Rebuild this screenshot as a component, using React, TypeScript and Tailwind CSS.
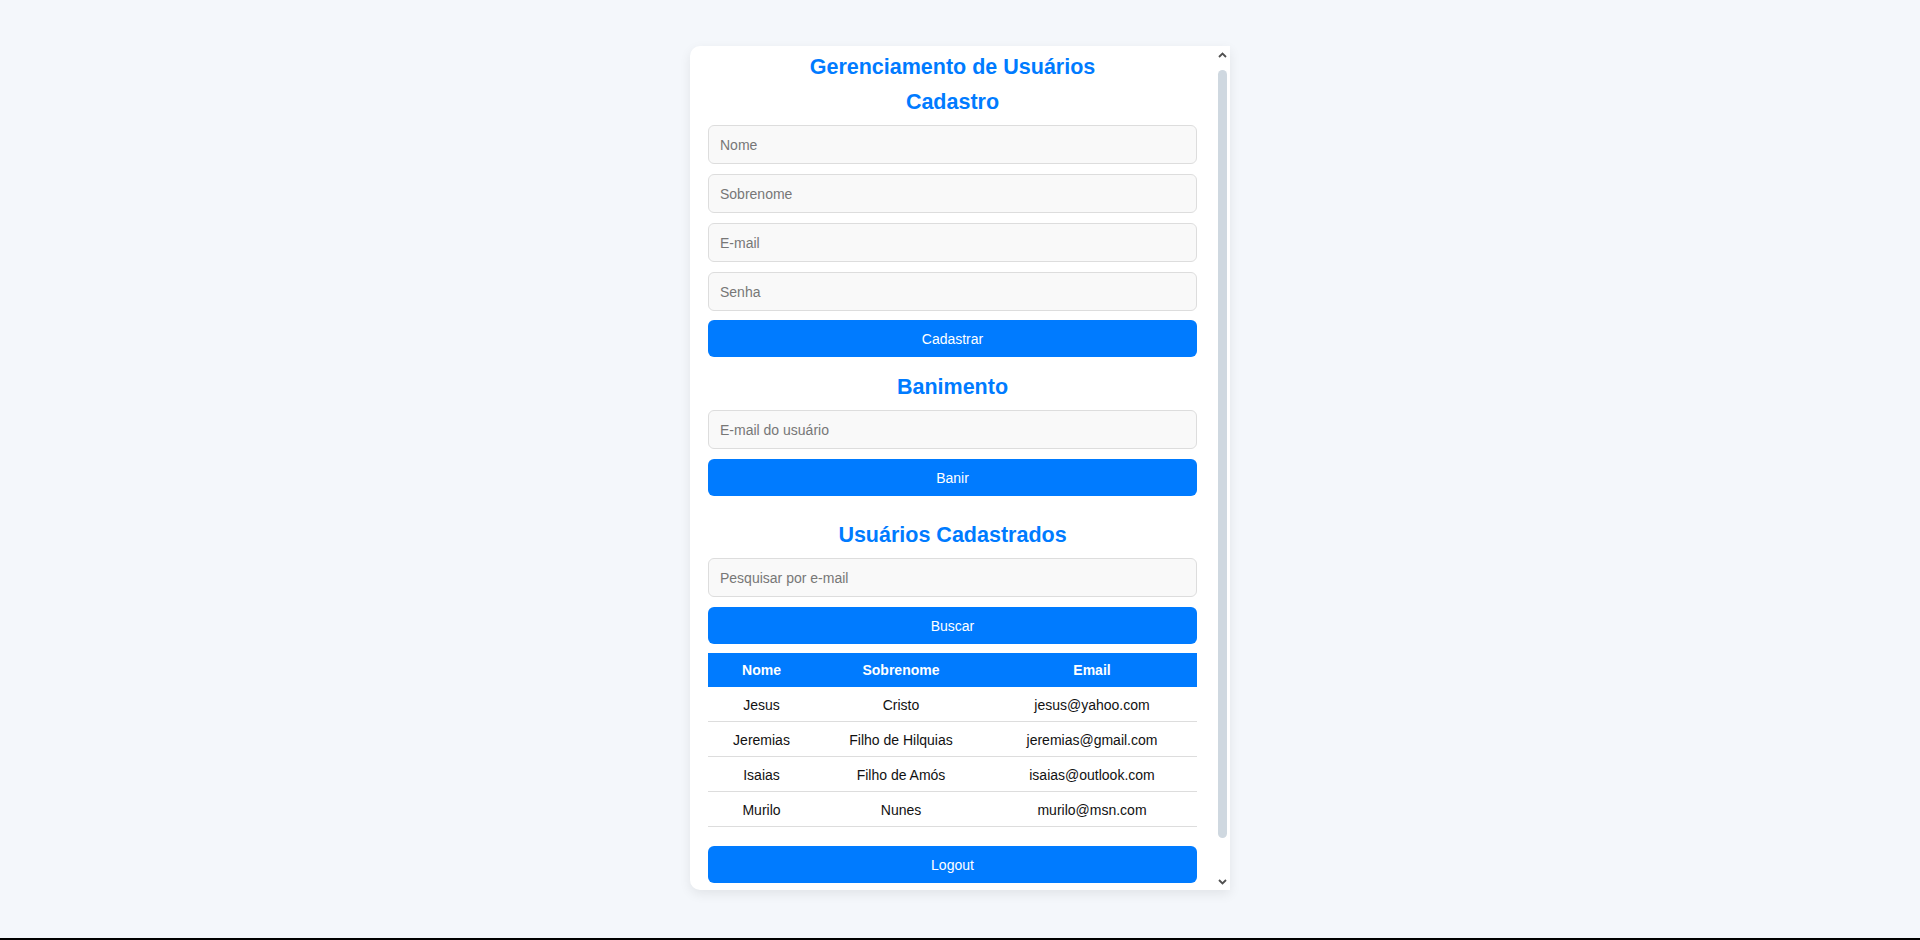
import React from 'react';

const users = [
  { nome: 'Jesus', sobrenome: 'Cristo', email: 'jesus@yahoo.com' },
  { nome: 'Jeremias', sobrenome: 'Filho de Hilquias', email: 'jeremias@gmail.com' },
  { nome: 'Isaias', sobrenome: 'Filho de Amós', email: 'isaias@outlook.com' },
  { nome: 'Murilo', sobrenome: 'Nunes', email: 'murilo@msn.com' },
];

const inputCls =
  'block w-full h-[39px] px-[11px] rounded-[6px] border border-[#dddddd] bg-[#f9f9f9] text-[14px] text-[#222] placeholder:text-[#777777] outline-none';
const buttonCls =
  'block w-full h-[37px] rounded-[6px] bg-[#007bff] text-white text-[14px] leading-[16px]';
const headingCls = 'h-[25px] leading-[25px] text-[21.5px] font-bold text-[#007bff] text-center';

function Chevron({ down }: { down?: boolean }) {
  return (
    <svg width="9" height="6" viewBox="0 0 9 6" className={down ? 'rotate-180' : ''}>
      <path d="M1 5 L4.5 1.5 L8 5" fill="none" stroke="#505050" strokeWidth="1.8" />
    </svg>
  );
}

function App() {
  return (
    <div
      className="w-full h-[940px] bg-[#f4f7fb] flex flex-col"
      style={{ fontFamily: '"Liberation Sans", Arial, sans-serif' }}
    >
      <div className="flex-1 flex justify-center pt-[46px]">
        {/* Card */}
        <div className="w-[540px] h-[844px] bg-white rounded-l-[10px] shadow-[0_4px_12px_rgba(0,0,0,0.08)] flex overflow-hidden">
          <div className="flex-1 px-[18px] pt-[9px]">
            <h1 className={headingCls}>Gerenciamento de Usuários</h1>
            <h2 className={`${headingCls} mt-[10px]`}>Cadastro</h2>

            <input className={`${inputCls} mt-[10px]`} placeholder="Nome" />
            <input className={`${inputCls} mt-[10px]`} placeholder="Sobrenome" />
            <input className={`${inputCls} mt-[10px]`} placeholder="E-mail" />
            <input className={`${inputCls} mt-[10px]`} placeholder="Senha" type="password" />
            <button className={`${buttonCls} mt-[9px]`}>Cadastrar</button>

            <h2 className={`${headingCls} mt-[18px]`}>Banimento</h2>
            <input className={`${inputCls} mt-[10px]`} placeholder="E-mail do usuário" />
            <button className={`${buttonCls} mt-[10px]`}>Banir</button>

            <h2 className={`${headingCls} mt-[27px]`}>Usuários Cadastrados</h2>
            <input className={`${inputCls} mt-[10px]`} placeholder="Pesquisar por e-mail" />
            <button className={`${buttonCls} mt-[10px]`}>Buscar</button>

            {/* Table */}
            <div className="mt-[9px] text-[14px]">
              <div className="grid grid-cols-[107px_172px_1fr] h-[34px] items-center bg-[#007bff] text-white font-bold text-center">
                <div>Nome</div>
                <div>Sobrenome</div>
                <div>Email</div>
              </div>
              {users.map((u) => (
                <div
                  key={u.email}
                  className="grid grid-cols-[107px_172px_1fr] h-[35px] items-center border-b border-[#dddddd] text-[#111] text-center pt-[2px]"
                >
                  <div>{u.nome}</div>
                  <div>{u.sobrenome}</div>
                  <div>{u.email}</div>
                </div>
              ))}
            </div>

            <button className={`${buttonCls} mt-[19px]`}>Logout</button>
          </div>

          {/* Scrollbar */}
          <div className="w-[15px] flex flex-col items-center">
            <div className="h-[15px] flex items-center justify-center mt-[1px]">
              <Chevron />
            </div>
            <div className="mt-[8px] w-[9px] h-[768px] rounded-full bg-[#cfd8e0]" />
            <div className="flex-1" />
            <div className="h-[15px] flex items-center justify-center mb-[1px]">
              <Chevron down />
            </div>
          </div>
        </div>
      </div>
      <div className="h-[2px] bg-black" />
    </div>
  );
}

export default App;
